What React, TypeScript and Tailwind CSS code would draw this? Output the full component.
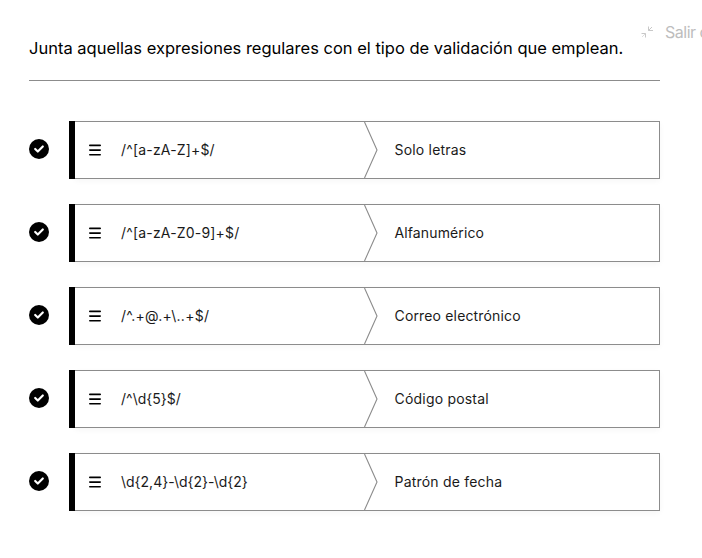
const rows = [
  { left: "/^[a-zA-Z]+$/", right: "Solo letras", leftSpacing: "tracking-[0.17px]", rightSpacing: "tracking-[0.2px]" },
  { left: "/^[a-zA-Z0-9]+$/", right: "Alfanumérico", leftSpacing: "tracking-[0.18px]", rightSpacing: "tracking-[0.12px]" },
  { left: "/^.+@.+\\..+$/", right: "Correo electrónico", leftSpacing: "tracking-[0.25px]", rightSpacing: "tracking-[0.16px]" },
  { left: "/^\\d{5}$/", right: "Código postal", leftSpacing: "tracking-[0px]", rightSpacing: "tracking-[0.2px]" },
  { left: "\\d{2,4}-\\d{2}-\\d{2}", right: "Patrón de fecha", leftSpacing: "tracking-[0px]", rightSpacing: "tracking-[0.2px]" },
];

function Check() {
  return (
    <svg className="mt-[-2px] h-5 w-5 shrink-0" viewBox="0 0 20 20">
      <circle cx="10" cy="10" r="10" fill="#000" />
      <path d="M6.2 10l2.6 2.5 5-5" fill="none" stroke="#fff" strokeWidth="2.2" strokeLinecap="round" strokeLinejoin="round" />
    </svg>
  );
}

function Row({ left, right, leftSpacing, rightSpacing }: (typeof rows)[number]) {
  return (
    <li className="flex h-[58px] items-center text-[14px] text-[#1a1a1a]">
      <Check />
      <div className="ml-5 h-[58px] w-[6px] bg-black" />
      <div className="flex h-[58px] w-[585px] items-stretch border border-l-0 border-[#8c8c8c] shadow-[0_2px_6px_rgba(0,0,0,0.04)]">
        <div className="flex w-[289px] items-center">
          <svg className="ml-[14px] h-3 w-3" viewBox="0 0 12 12">
            <path d="M.8 1.4h10.4M.8 6.1h10.4M.8 10.8h10.4" stroke="#000" strokeWidth="1.6" strokeLinecap="round" />
          </svg>
          <span className={`ml-5 pb-[2px] ${leftSpacing}`}>{left}</span>
        </div>
        <svg className="h-14 w-[14px]" viewBox="0 0 14 56">
          <path d="M0.5 0L13 28L0.5 56" fill="none" stroke="#8c8c8c" strokeWidth="1.1" />
        </svg>
        <div className={`flex items-center pb-[2px] pl-[16.5px] ${rightSpacing}`}>{right}</div>
      </div>
    </li>
  );
}

export default function App() {
  return (
    <div className="h-[558px] w-[702px] overflow-hidden bg-white font-['Inter',sans-serif] text-black">
      <div className="flex h-20 pl-[29px]">
        <h1 className="w-[612px] shrink-0 pt-9 text-[16.5px] leading-6 whitespace-nowrap">
          Junta aquellas expresiones regulares con el tipo de validación que emplean.
        </h1>
        <div className="flex h-6 shrink-0 translate-y-5 items-center gap-3 text-[16px] tracking-[-0.5px] text-[#bdbdbd]">
          <svg className="h-3 w-3" viewBox="0 0 12 12" fill="none" stroke="#c8c8c8">
            <path d="M7.5 .5v4H12M7.5 4.5L11 1M.5 7.5h4v4" />
            <path d="M4.5 7.5L1 11" strokeOpacity=".6" />
          </svg>
          <span className="whitespace-nowrap">Salir del</span>
        </div>
      </div>
      <hr className="ml-[29px] w-[631px] border-[#8c8c8c]" />
      <ul className="mt-10 ml-[29px] flex flex-col gap-[25px]">
        {rows.map((row) => <Row key={row.left} {...row} />)}
      </ul>
    </div>
  );
}
